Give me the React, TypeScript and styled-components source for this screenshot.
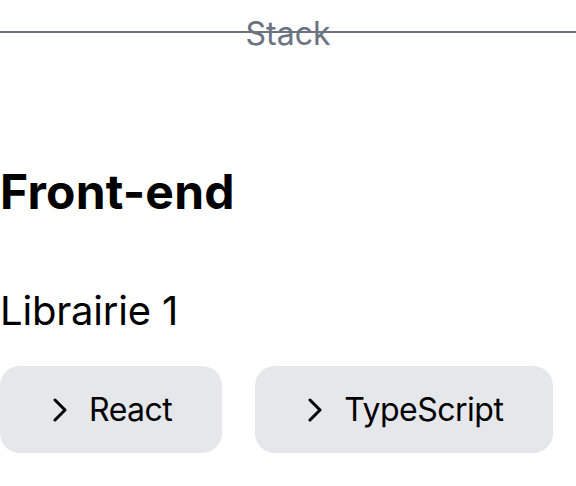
import styled, { createGlobalStyle } from 'styled-components';

const GlobalStyle = createGlobalStyle`
  html, body {
    margin: 0;
    padding: 0;
    background: #ffffff;
  }
  body {
    font-family: Inter, "Noto Sans", sans-serif;
    color: #000000;
  }
`;

const stack = ['React', 'TypeScript'];

function Chevron() {
  return (
    <ChevronIcon viewBox="0 0 14 24" aria-hidden="true">
      <path d="M2 2 L12 12 L2 22" />
    </ChevronIcon>
  );
}

export default function App() {
  return (
    <>
      <GlobalStyle />
      <Page>
        <Divider>
          <DividerLine />
          <DividerLabel>Stack</DividerLabel>
        </Divider>
        <SectionTitle>Front-end</SectionTitle>
        <GroupTitle>Librairie 1</GroupTitle>
        <TagList>
          {stack.map((name) => (
            <TagButton key={name}>
              <Chevron />
              {name}
            </TagButton>
          ))}
        </TagList>
      </Page>
    </>
  );
}

const Page = styled.main`
  display: flex;
  flex-direction: column;
  align-items: flex-start;
  padding-top: 14px;
`;

const Divider = styled.div`
  display: grid;
  align-self: stretch;
  align-items: center;
  justify-items: center;
`;

const DividerLine = styled.hr`
  grid-area: 1 / 1;
  align-self: center;
  width: 100%;
  margin: 0;
  margin-top: -3px;
  border: none;
  height: 2px;
  background: #6b7280;
`;

const DividerLabel = styled.span`
  grid-area: 1 / 1;
  font-size: 32px;
  color: #6b7280;
  line-height: normal;
`;

const SectionTitle = styled.h2`
  margin: 109px 0 0;
  font-size: 48px;
  font-weight: 700;
  line-height: normal;
  letter-spacing: 0.2px;
`;

const GroupTitle = styled.h3`
  margin: 65px 0 0;
  font-size: 40px;
  font-weight: 400;
  line-height: normal;
  letter-spacing: -0.2px;
`;

const TagList = styled.div`
  display: flex;
  gap: 33px;
  margin-top: 31px;
`;

const TagButton = styled.button`
  display: flex;
  align-items: center;
  gap: 22px;
  padding: 24px 50px 24px 53px;
  border: none;
  border-radius: 20px;
  background: #e5e7eb;
  font-family: Inter, "Noto Sans", sans-serif;
  font-size: 32px;
  line-height: normal;
  letter-spacing: -0.5px;
  color: #000000;
`;

const ChevronIcon = styled.svg`
  width: 14px;
  height: 24px;
  fill: none;
  stroke: #000000;
  stroke-width: 3;
  stroke-linecap: round;
  stroke-linejoin: round;
`;
